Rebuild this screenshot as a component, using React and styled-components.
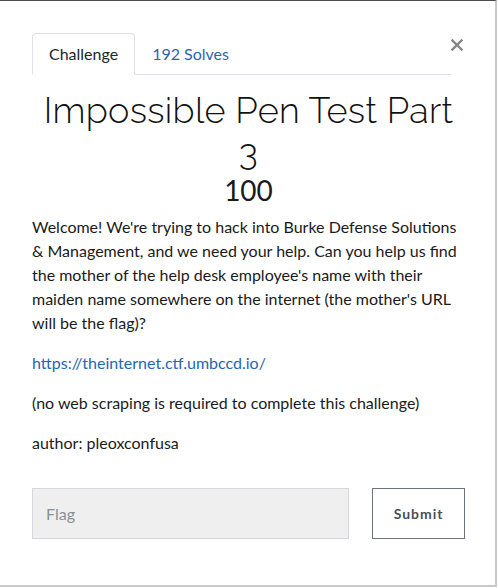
import styled, { createGlobalStyle } from 'styled-components';

const GlobalStyle = createGlobalStyle`
  html, body {
    margin: 0;
    padding: 0;
    background: #ffffff;
  }
  body {
    font-family: 'Lato', 'Liberation Sans', sans-serif;
    color: #212529;
  }
`;

const Modal = styled.div`
  box-sizing: border-box;
  width: 497px;
  height: 587px;
  background: #ffffff;
  border-top: 1px solid #4a4a4a;
  border-right: 2px solid #c9c9c9;
  border-bottom: 2px solid #c9c9c9;
  padding: 32px 30px 0 32px;
`;

const Header = styled.div`
  display: flex;
  align-items: flex-start;
`;

const Tabs = styled.ul`
  flex: 1;
  display: flex;
  list-style: none;
  margin: 0;
  padding: 0;
  border-bottom: 1px solid #dee2e6;
`;

const Tab = styled.li`
  margin-bottom: -1px;
  padding: 8px 16px;
  font-size: 16px;
  line-height: 24px;
  border: 1px solid ${(props) => (props.active ? '#dee2e6' : 'transparent')};
  border-bottom-color: ${(props) => (props.active ? '#ffffff' : 'transparent')};
  border-top-left-radius: 4px;
  border-top-right-radius: 4px;
  color: ${(props) => (props.active ? '#212529' : '#1f66b3')};
  background: ${(props) => (props.active ? '#ffffff' : 'transparent')};
`;

const Close = styled.button`
  border: none;
  background: none;
  padding: 0;
  margin: 4px 0 0 0;
  width: 14px;
  height: 16px;
  cursor: pointer;
  svg {
    display: block;
  }
`;

const Title = styled.h3`
  margin: 14px 0 0 0;
  text-align: center;
  font-family: 'Raleway', 'Lato', 'Liberation Sans', sans-serif;
  font-weight: 300;
  font-size: 36px;
  line-height: 42px;
  letter-spacing: 0.3px;
  color: #111111;
`;

const Points = styled.h4`
  margin: 0;
  text-align: center;
  font-weight: 400;
  font-size: 28px;
  line-height: 34px;
  color: #1a1a1a;
`;

const Description = styled.div`
  margin-top: 8px;
  font-size: 16px;
  line-height: 24px;
  color: #1a1a1a;
  p {
    margin: 0 0 16px 0;
  }
  a {
    color: #1f66b3;
    text-decoration: none;
  }
`;

const SubmitRow = styled.form`
  display: flex;
  gap: 23px;
  margin-top: 33px;
`;

const FlagInput = styled.input`
  box-sizing: border-box;
  width: 318px;
  height: 51px;
  padding: 0 13px;
  background: #efefef;
  border: 1px solid #d4d8dc;
  font-family: 'Lato', 'Liberation Sans', sans-serif;
  font-size: 16px;
  color: #495057;
  outline: none;
  &::placeholder {
    color: #8a8f94;
  }
`;

const SubmitButton = styled.button`
  box-sizing: border-box;
  width: 93px;
  height: 51px;
  background: #ffffff;
  border: 1px solid #6c757d;
  font-family: 'Lato', 'Liberation Sans', sans-serif;
  font-weight: 700;
  font-size: 14px;
  letter-spacing: 1px;
  color: #495057;
`;

export default function App() {
  return (
    <>
      <GlobalStyle />
      <Modal>
        <Header>
          <Tabs>
            <Tab active>Challenge</Tab>
            <Tab>192 Solves</Tab>
          </Tabs>
          <Close aria-label="Close">
            <svg width="12" height="12" viewBox="0 0 12 12">
              <path
                d="M1.5 1.5 L10.5 10.5 M10.5 1.5 L1.5 10.5"
                stroke="#858585"
                strokeWidth="2.4"
                strokeLinecap="square"
              />
            </svg>
          </Close>
        </Header>
        <Title>Impossible Pen Test Part 3</Title>
        <Points>100</Points>
        <Description>
          <p>
            Welcome! We're trying to hack into Burke Defense Solutions &amp;
            Management, and we need your help. Can you help us find the mother
            of the help desk employee's name with their maiden name somewhere
            on the internet (the mother's URL will be the flag)?
          </p>
          <p>
            <a href="#">https://theinternet.ctf.umbccd.io/</a>
          </p>
          <p>(no web scraping is required to complete this challenge)</p>
          <p>author: pleoxconfusa</p>
        </Description>
        <SubmitRow onSubmit={(e) => e.preventDefault()}>
          <FlagInput placeholder="Flag" />
          <SubmitButton type="submit">Submit</SubmitButton>
        </SubmitRow>
      </Modal>
    </>
  );
}
